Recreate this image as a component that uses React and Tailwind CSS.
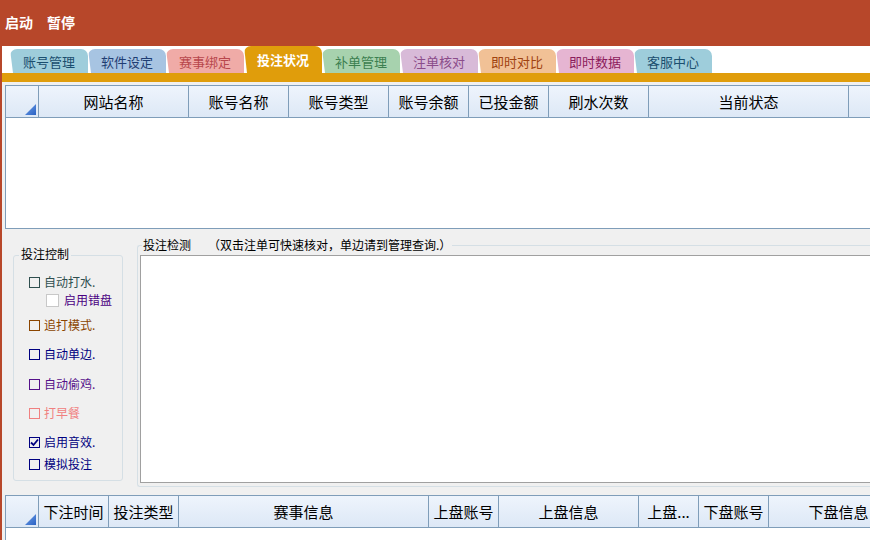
import React from "react";

const tabs = [
    { label: "账号管理", cls: "bg-[#9ecddb] text-[#1b4f6f]" },
    { label: "软件设定", cls: "bg-[#a7c4e2] text-[#1f3d73]" },
    { label: "赛事绑定", cls: "bg-[#f0aba7] text-[#b8474c]" },
    { label: "投注状况", cls: "bg-[#e09d0b] text-white font-bold", active: true },
    { label: "补单管理", cls: "bg-[#a7d2ae] text-[#3c7f50]" },
    { label: "注单核对", cls: "bg-[#d8bad8] text-[#8b4c8a]" },
    { label: "即时对比", cls: "bg-[#f1c196] text-[#a0420f]" },
    { label: "即时数据", cls: "bg-[#e6b5d2] text-[#8c1c5c]" },
    { label: "客服中心", cls: "bg-[#9ecddb] text-[#1b4f6f]" },
];

const topCols = [
    { label: "网站名称", w: "w-[150px]" },
    { label: "账号名称", w: "w-[100px]" },
    { label: "账号类型", w: "w-[100px]" },
    { label: "账号余额", w: "w-[80px]" },
    { label: "已投金额", w: "w-[80px]" },
    { label: "刷水次数", w: "w-[100px]" },
    { label: "当前状态", w: "w-[200px]" },
    { label: "", w: "w-[100px]" },
];

const bottomCols = [
    { label: "下注时间", w: "w-[70px]" },
    { label: "投注类型", w: "w-[70px]" },
    { label: "赛事信息", w: "w-[250px]" },
    { label: "上盘账号", w: "w-[70px]" },
    { label: "上盘信息", w: "w-[140px]" },
    { label: "上盘...", w: "w-[60px]" },
    { label: "下盘账号", w: "w-[70px]" },
    { label: "下盘信息", w: "w-[140px]" },
];

// checkbox rows of 投注控制
const checks = [
    { label: "自动打水.", cls: "text-[#2f4f4f] border-[#2f4f4f] mt-[18px]" },
    { label: "启用错盘", cls: "text-[#4b0082] mt-[2px] pl-[17px]", sub: true },
    { label: "追打模式.", cls: "text-[#8b4500] border-[#8b4500] mt-[9px]" },
    { label: "自动单边.", cls: "text-[#000080] border-[#000080] mt-[13px]" },
    { label: "自动偷鸡.", cls: "text-[#55118a] border-[#55118a] mt-[14px]" },
    { label: "打早餐", cls: "text-[#f08080] border-[#f08080] mt-[13px]" },
    { label: "启用音效.", cls: "text-[#000080] border-[#000080] mt-[13px]", checked: true },
    { label: "模擬投注".replace("擬", "拟"), cls: "text-[#000080] border-[#000080] mt-[6px]" },
];

const Corner = () => (
    <div className="relative w-[33px] shrink-0 border-r border-[#7f9db9]">
        <svg className="absolute right-[2px] bottom-[2px]" width="11" height="11" viewBox="0 0 11 11">
            <defs>
                <linearGradient id="tri" x1="0" y1="0" x2="1" y2="1">
                    <stop offset="0" stopColor="#6fa0e8" />
                    <stop offset="1" stopColor="#2a62c4" />
                </linearGradient>
            </defs>
            <polygon points="11,0 11,11 0,11" fill="url(#tri)" />
        </svg>
    </div>
);

const HeaderRow = ({ cols }) => (
    <div className="flex h-[32px] border-b border-[#7f9db9] bg-linear-to-b from-[#eef4fc] to-[#dde8f6]">
        <Corner />
        {cols.map((c, i) => (
            <div
                key={i}
                className={`${c.w} shrink-0 border-r border-[#7f9db9] flex items-center justify-center text-[15px] text-black whitespace-nowrap`}
            >
                {c.label}
            </div>
        ))}
    </div>
);

const App = () => {
    return (
        <div className="w-[870px] h-[540px] overflow-hidden bg-[#f0f0f0] border-l-2 border-[#b7472a] font-['Noto_Sans_CJK_SC',sans-serif] leading-none">
            {/* top bar */}
            <div className="h-[46px] bg-[#b7472a] flex items-center gap-[14px] pl-[3px] pb-[2px] text-[14px] font-bold text-white">
                <span>启动</span>
                <span>暂停</span>
            </div>

            {/* tabs */}
            <div className="h-[27px] bg-white flex items-end pl-[8px]">
                {tabs.map((t) => (
                    <div
                        key={t.label}
                        className={`${t.active ? "h-[27px]" : "h-[24px]"} w-[78px] shrink-0 flex items-center justify-center text-[13px] rounded-t-[7px] [clip-path:polygon(0_0,100%_0,100%_100%,3px_100%)] ${t.cls}`}
                    >
                        {t.label}
                    </div>
                ))}
            </div>
            <div className="h-[9px] bg-[#e09d0b]" />

            {/* top grid */}
            <div className="ml-[3px] mt-[3px] w-[950px] h-[144px] border border-[#7f9db9] bg-white">
                <HeaderRow cols={topCols} />
            </div>

            {/* middle */}
            <div className="flex h-[266px] text-[12px]">
                <div className="relative ml-[11px] mt-[26px] w-[110px] h-[226px] shrink-0 border border-[#d5dfe5] rounded-[3px]">
                    <span className="absolute -top-[10px] left-[5px] px-[2px] h-[16px] flex items-center bg-[#f0f0f0] text-black">
                        投注控制
                    </span>
                    <div className="flex flex-col pl-[15px]">
                        {checks.map((c) => (
                            <div key={c.label} className={`flex items-center h-[16px] ${c.cls}`}>
                                {c.sub ? (
                                    <span className="w-[13px] h-[13px] border border-[#c8c8c8] bg-white shrink-0" />
                                ) : (
                                    <span className="w-[11px] h-[11px] border shrink-0 flex items-center justify-center">
                                        {c.checked && (
                                            <svg width="9" height="9" viewBox="0 0 9 9">
                                                <path d="M1 4.5 L3.5 7 L8 1.5" stroke="#000080" strokeWidth="1.8" fill="none" />
                                            </svg>
                                        )}
                                    </span>
                                )}
                                <span className={c.sub ? "ml-[5px]" : "ml-[4px]"}>{c.label}</span>
                            </div>
                        ))}
                    </div>
                </div>

                <div className="relative ml-[14px] mt-[16px] w-[760px] h-[242px] shrink-0 border border-r-0 border-[#d5dfe5] rounded-l-[3px]">
                    <span className="absolute -top-[9px] left-[4px] px-[1px] h-[16px] flex items-center bg-[#f0f0f0] text-black whitespace-nowrap">
                        投注检测<span className="ml-[17px]">（双击注单可快速核对，单边请到管理查询.）</span>
                    </span>
                    <div className="ml-[2px] mt-[9px] h-[228px] bg-white border border-[#a0a0a0]" />
                </div>
            </div>

            {/* bottom grid */}
            <div className="ml-[3px] w-[950px] h-[60px] border border-[#7f9db9] bg-white">
                <HeaderRow cols={bottomCols} />
            </div>
        </div>
    );
};

export default App;
